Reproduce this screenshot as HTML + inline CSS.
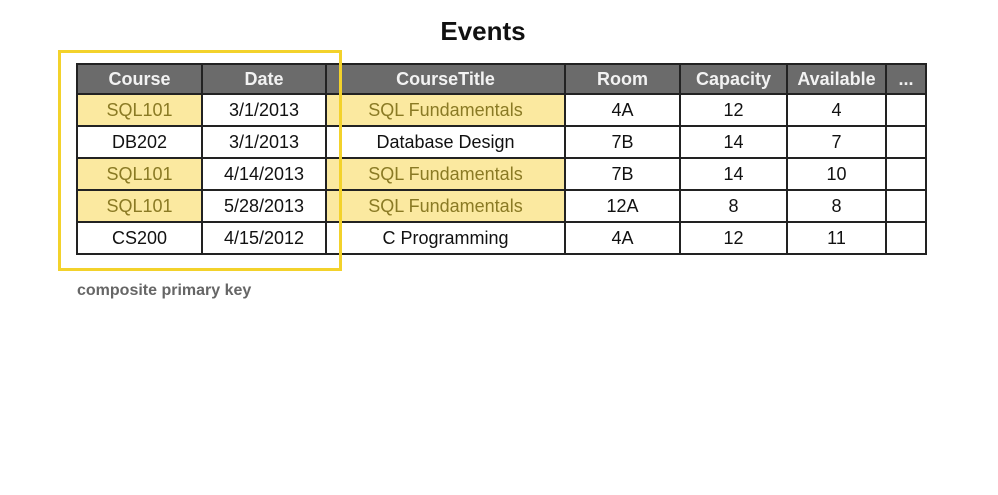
<!DOCTYPE html>
<html><head><style>
body{margin:0;width:998px;height:495px;background:#fff;position:relative;overflow:hidden;font-family:"Liberation Sans",sans-serif}
h1{position:absolute;left:0;width:966px;top:16px;margin:0;text-align:center;font-size:26px;font-weight:bold;color:#111}
table{position:absolute;left:76px;top:63px;border-collapse:collapse;font-size:18px}
td,th{border:2px solid #222;height:30px;padding:0;text-align:center;color:#111;font-weight:normal}
th{background:#6b6b6b;color:#f2f2f2;font-weight:bold;font-size:18px;height:28px}
.y{background:#fbe9a0;color:#8a7a24}
.box{position:absolute;left:58px;top:50px;width:278px;height:215px;border:3px solid #f3d22b}
.cap{position:absolute;left:77px;top:282px;font-size:16px;color:#666;font-weight:bold}
</style></head><body>
<h1>Events</h1>
<table>
<colgroup><col style="width:125px"><col style="width:124px"><col style="width:239px"><col style="width:115px"><col style="width:107px"><col style="width:99px"><col style="width:40px"></colgroup>
<tr><th>Course</th><th>Date</th><th>CourseTitle</th><th>Room</th><th>Capacity</th><th>Available</th><th>...</th></tr>
<tr><td class="y">SQL101</td><td>3/1/2013</td><td class="y">SQL Fundamentals</td><td>4A</td><td>12</td><td>4</td><td></td></tr>
<tr><td>DB202</td><td>3/1/2013</td><td>Database Design</td><td>7B</td><td>14</td><td>7</td><td></td></tr>
<tr><td class="y">SQL101</td><td>4/14/2013</td><td class="y">SQL Fundamentals</td><td>7B</td><td>14</td><td>10</td><td></td></tr>
<tr><td class="y">SQL101</td><td>5/28/2013</td><td class="y">SQL Fundamentals</td><td>12A</td><td>8</td><td>8</td><td></td></tr>
<tr><td>CS200</td><td>4/15/2012</td><td>C Programming</td><td>4A</td><td>12</td><td>11</td><td></td></tr>
</table>
<div class="box"></div>
<div class="cap">composite primary key</div>
</body></html>
